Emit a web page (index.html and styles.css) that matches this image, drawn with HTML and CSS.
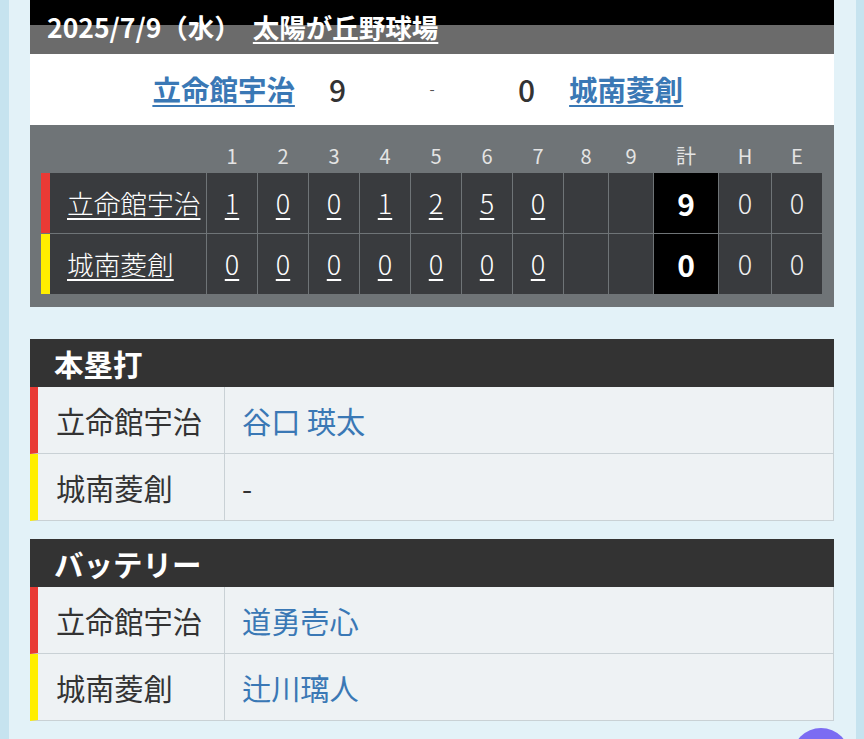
FILE: index.html
```html
<!DOCTYPE html>
<html lang="ja">
<head>
<meta charset="utf-8">
<title>試合結果</title>
<link rel="stylesheet" href="styles.css">
</head>
<body>
<div class="page">
  <div class="title-bar">
    <span class="date">2025/7/9（水）</span>
    <a class="venue" href="#">太陽が丘野球場</a>
  </div>

  <div class="score-row">
    <div class="side side-left">
      <a class="team-link" href="#">立命館宇治</a>
      <span class="score">9</span>
    </div>
    <div class="dash">-</div>
    <div class="side side-right">
      <span class="score">0</span>
      <a class="team-link" href="#">城南菱創</a>
    </div>
  </div>

  <div class="board">
    <div class="board-grid">
      <div class="hd"></div>
      <div class="hd">1</div><div class="hd">2</div><div class="hd">3</div><div class="hd">4</div><div class="hd">5</div><div class="hd">6</div><div class="hd">7</div><div class="hd">8</div><div class="hd">9</div>
      <div class="hd">計</div><div class="hd">H</div><div class="hd">E</div>

      <div class="cell team home"><a href="#">立命館宇治</a></div>
      <div class="cell"><a href="#">1</a></div>
      <div class="cell"><a href="#">0</a></div>
      <div class="cell"><a href="#">0</a></div>
      <div class="cell"><a href="#">1</a></div>
      <div class="cell"><a href="#">2</a></div>
      <div class="cell"><a href="#">5</a></div>
      <div class="cell"><a href="#">0</a></div>
      <div class="cell"></div>
      <div class="cell"></div>
      <div class="cell total">9</div>
      <div class="cell plain">0</div>
      <div class="cell plain">0</div>

      <div class="cell team away"><a href="#">城南菱創</a></div>
      <div class="cell"><a href="#">0</a></div>
      <div class="cell"><a href="#">0</a></div>
      <div class="cell"><a href="#">0</a></div>
      <div class="cell"><a href="#">0</a></div>
      <div class="cell"><a href="#">0</a></div>
      <div class="cell"><a href="#">0</a></div>
      <div class="cell"><a href="#">0</a></div>
      <div class="cell"></div>
      <div class="cell"></div>
      <div class="cell total">0</div>
      <div class="cell plain">0</div>
      <div class="cell plain">0</div>
    </div>
  </div>

  <section class="info info-first">
    <h2 class="info-head">本塁打</h2>
    <div class="info-row home">
      <div class="info-label">立命館宇治</div>
      <div class="info-value"><a href="#">谷口 瑛太</a></div>
    </div>
    <div class="info-row away">
      <div class="info-label">城南菱創</div>
      <div class="info-value">-</div>
    </div>
  </section>

  <section class="info info-second">
    <h2 class="info-head">バッテリー</h2>
    <div class="info-row home">
      <div class="info-label">立命館宇治</div>
      <div class="info-value"><a href="#">道勇壱心</a></div>
    </div>
    <div class="info-row away">
      <div class="info-label">城南菱創</div>
      <div class="info-value"><a href="#">辻川璃人</a></div>
    </div>
  </section>
</div>
<a class="fab" href="#" aria-label="top"></a>
</body>
</html>
```

FILE: styles.css
```css
* { box-sizing: border-box; }

html, body {
  margin: 0;
  padding: 0;
}

body {
  font-family: "Noto Sans CJK JP", "Noto Sans", sans-serif;
  color: #333;
  background: linear-gradient(to right, #c6e3ef 0, #c6e3ef 9px, #e3f2f8 9px, #e3f2f8 calc(100% - 8px), #c6e3ef calc(100% - 8px));
  min-height: 739px;
  overflow: hidden;
}

a { color: inherit; }

.page {
  padding: 0 30px;
}

/* title */
.title-bar {
  height: 54px;
  background: linear-gradient(to bottom, #000 0, #000 25px, #6b6b6b 25px, #6b6b6b 100%);
  display: flex;
  align-items: center;
  gap: 12px;
  padding-left: 17px;
  color: #fff;
  font-size: 26.5px;
  font-weight: 700;
  line-height: 30px;
  padding-bottom: 1px;
}
.venue {
  color: #fff;
  text-decoration: underline;
  text-underline-offset: 4px;
  text-decoration-thickness: 2px;
}

/* score */
.score-row {
  height: 71px;
  background: #fff;
  display: flex;
  align-items: center;
  padding-bottom: 2px;
}
.side {
  flex: 1;
  display: flex;
  align-items: center;
  gap: 34px;
}
.side-left { justify-content: flex-end; }
.side-right { justify-content: flex-start; }
.dash {
  width: 172px;
  text-align: center;
  font-size: 15px;
  color: #555;
}
.team-link {
  color: #3a78b5;
  font-size: 28.5px;
  font-weight: 700;
  line-height: 36px;
  text-decoration: underline;
  text-underline-offset: 4px;
}
.score {
  font-size: 30px;
  font-weight: 500;
  color: #333;
  line-height: 36px;
}

/* board */
.board {
  background: #6f7477;
  padding: 0 12px 13px 11px;
}
.board-grid {
  display: grid;
  grid-template-columns: 165px repeat(7, 50px) 44px 44px 64px 52px 50px;
  grid-template-rows: 47px 60px 60px;
  column-gap: 1px;
  row-gap: 1px;
}
.hd {
  display: flex;
  align-items: flex-end;
  justify-content: center;
  padding-bottom: 4px;
  color: #e4e4e4;
  font-size: 20px;
  line-height: 24px;
}
.cell {
  background: #393b3e;
  display: flex;
  align-items: center;
  justify-content: center;
  color: #fff;
  font-size: 27px;
  line-height: 34px;
  font-weight: 300;
}
.cell a {
  color: #fff;
  text-decoration: underline;
  text-underline-offset: 4px;
  text-decoration-thickness: 2px;
}
.cell.team {
  justify-content: flex-start;
  padding-left: 17px;
  font-size: 26.7px;
  border-left: 9px solid #e93a35;
}
.cell.team.away { border-left-color: #ffee00; }
.cell.total {
  background: #000;
  font-weight: 700;
  font-size: 30px;
}
.cell.plain { color: #f0f0f0; }

/* info sections */
.info {
  margin: 0;
  border-right: 1px solid #c9d1d5;
  border-left: 1px solid #c9d1d5;
}
.info-first { margin-top: 32px; }
.info-second { margin-top: 18px; }
.info-head {
  margin: 0;
  height: 48px;
  background: #333;
  color: #fff;
  font-size: 29.5px;
  font-weight: 700;
  line-height: 48px;
  padding-left: 24px;
  margin-left: -1px;
  margin-right: -1px;
}
.info-row {
  display: flex;
  height: 67px;
  background: #eef2f4;
  border-bottom: 1px solid #c9d1d5;
  border-left: 8px solid #e93a35;
  margin-left: -1px;
}
.info-row.away { border-left-color: #ffee00; }
.info-label {
  width: 187px;
  border-right: 1px solid #c9d1d5;
  display: flex;
  align-items: center;
  padding-left: 18px;
  font-size: 29.2px;
  color: #333;
}
.info-value {
  flex: 1;
  display: flex;
  align-items: center;
  padding-left: 17px;
  font-size: 29.2px;
  color: #333;
}
.info-value a {
  color: #3a78b5;
  text-decoration: none;
}

.fab {
  position: fixed;
  right: 14px;
  bottom: -47px;
  width: 58px;
  height: 58px;
  border-radius: 50%;
  background: #7b6cf2;
}
```
